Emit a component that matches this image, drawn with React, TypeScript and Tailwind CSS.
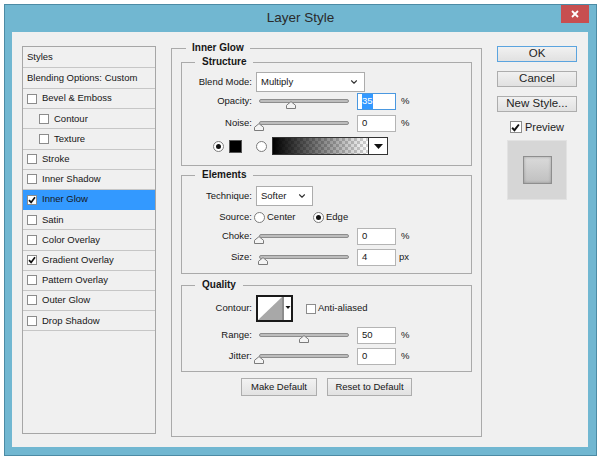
import React from 'react';
import { ChevronDown } from 'lucide-react';

const styleRows = [
  { label: 'Bevel & Emboss', checked: false },
  { label: 'Contour', nested: true },
  { label: 'Texture', nested: true },
  { label: 'Stroke' },
  { label: 'Inner Shadow' },
  { label: 'Inner Glow', checked: true, active: true },
  { label: 'Satin' },
  { label: 'Color Overlay' },
  { label: 'Gradient Overlay', checked: true },
  { label: 'Pattern Overlay' },
  { label: 'Outer Glow' },
  { label: 'Drop Shadow' },
] as { label: string; checked?: boolean; nested?: boolean; active?: boolean }[];

const CheckBox = ({ checked, big }: { checked?: boolean; big?: boolean }) => (
  <span
    className={`flex shrink-0 items-center justify-center border border-[#8c8c8c] bg-white ${
      big ? 'h-[12px] w-[12px]' : 'h-[10px] w-[10px]'
    }`}
  >
    {checked && (
      <svg width={big ? 9 : 8} height={big ? 9 : 8} viewBox="0 0 8 8">
        <path d="M1 4.2 L3.1 6.4 L7 1.3" fill="none" stroke="#111" strokeWidth="1.7" />
      </svg>
    )}
  </span>
);

const Radio = ({ on }: { on?: boolean }) => (
  <span className="flex h-[11px] w-[11px] shrink-0 items-center justify-center rounded-full border border-[#7c7c7c] bg-white">
    {on && <span className="h-[5px] w-[5px] rounded-full bg-[#111]" />}
  </span>
);

const Label = ({ children }: { children: React.ReactNode }) => (
  <span className="w-[70px] shrink-0 text-right">{children}</span>
);

const Slider = ({ value }: { value: number }) => (
  <div className="relative ml-[7px] h-[17px] w-[90px] shrink-0">
    <div className="mt-[6px] h-[4px] w-full rounded-full border border-[#8d8d8d] bg-[#bdbdbd]" />
    <svg
      className="absolute top-[8px]"
      style={{ left: (value / 100) * 90 - 5 }}
      width="10"
      height="8"
      viewBox="0 0 10 8"
    >
      <path d="M0.5 7.5 V4.3 L5 0.6 L9.5 4.3 V7.5 Z" fill="#f4f4f4" stroke="#7b7b7b" />
    </svg>
  </div>
);

const NumField = ({ value, selected }: { value: string; selected?: boolean }) => (
  <div
    className={`ml-[8px] flex h-[17px] w-[39px] shrink-0 items-center border bg-white pl-[4px] ${
      selected ? 'border-[#4a98e0]' : 'border-[#b4b4b4]'
    }`}
  >
    <span className={selected ? 'bg-[#3399ff] text-white' : ''}>{value}</span>
  </div>
);

const Select = ({ value, width }: { value: string; width: string }) => (
  <div
    className={`ml-[4px] flex h-[20px] shrink-0 items-center justify-between border border-[#acacac] bg-white pl-[4px] pr-[5px] ${width}`}
  >
    <span>{value}</span>
    <ChevronDown size={10} strokeWidth={2.6} className="text-[#333]" />
  </div>
);

const SmallButton = ({ children, width }: { children: React.ReactNode; width: string }) => (
  <div
    className={`flex h-[18px] items-center justify-center border border-[#adadad] bg-gradient-to-b from-[#f2f2f2] to-[#e2e2e2] ${width}`}
  >
    {children}
  </div>
);

const SideButton = ({ children, focused }: { children: React.ReactNode; focused?: boolean }) => (
  <div
    className={`flex h-[16px] w-[80px] items-center justify-center border bg-gradient-to-b from-[#f1f1f1] to-[#e1e1e1] text-[11.5px] text-[#1e1e1e] ${
      focused ? 'border-[#5ba4df]' : 'border-[#adadad]'
    }`}
  >
    {children}
  </div>
);

export default function App() {
  return (
    <div className="h-[459px] w-[600px] bg-white pl-[4px] pt-[4px] font-['Liberation_Sans',Arial,sans-serif] text-[9.5px] text-[#161616]">
      <div className="flex h-[452px] w-[593px] flex-col border border-[#4c8ba5] bg-[#71b7d1]">
        {/* title bar */}
        <div className="grid h-[27px] grid-cols-[1fr_auto_1fr]">
          <div />
          <div className="pt-[5px] text-[13.5px] leading-[16px] text-[#2a2a2a]">Layer Style</div>
          <div className="flex justify-end pr-[7px]">
            <div className="flex h-[18px] w-[28px] items-center justify-center bg-[#c74f50]">
              <svg width="8" height="8" viewBox="0 0 8 8">
                <path d="M1 1 L7 7 M7 1 L1 7" stroke="#fff" strokeWidth="1.8" />
              </svg>
            </div>
          </div>
        </div>

        {/* dialog body */}
        <div className="ml-[7px] mr-[8px] mb-[8px] flex flex-1 items-start bg-[#f0f0f0]">
          {/* styles list */}
          <div className="ml-[10px] mt-[14px] h-[388px] w-[134px] border border-[#a6a6a6]">
            <div className="flex h-[21px] items-center border-b border-[#c6c6c6] pl-[4px]">Styles</div>
            <div className="flex h-[21px] items-center border-b border-[#c6c6c6] pl-[4px]">
              Blending Options: Custom
            </div>
            {styleRows.map((r) => (
              <div
                key={r.label}
                className={`flex h-[20.2px] items-center gap-[5px] border-b ${
                  r.active ? 'border-[#3399ff] bg-[#3399ff]' : 'border-[#c6c6c6]'
                } ${r.nested ? 'pl-[16px]' : 'pl-[4px]'}`}
              >
                <CheckBox checked={r.checked} />
                <span>{r.label}</span>
              </div>
            ))}
          </div>

          {/* Inner Glow */}
          <fieldset className="ml-[15px] mt-[10px] h-[395px] w-[311px] border border-[#aaaaaa] px-[9px]">
            <legend className="ml-[5px] px-[6px] text-[10px] font-bold leading-[12px]">Inner Glow</legend>

            <fieldset className="mt-[2px] border border-[#aaaaaa]">
              <legend className="ml-[13px] px-[7px] text-[10px] font-bold leading-[12px]">Structure</legend>
              <div className="flex flex-col pb-[10px] pt-[4px]">
                <div className="flex h-[20px] items-center">
                  <Label>Blend Mode:</Label>
                  <Select value="Multiply" width="w-[109px]" />
                </div>
                <div className="mt-[1px] flex h-[17px] items-center">
                  <Label>Opacity:</Label>
                  <Slider value={35} />
                  <NumField value="35" selected />
                  <span className="ml-[5px]">%</span>
                </div>
                <div className="mt-[5px] flex h-[17px] items-center">
                  <Label>Noise:</Label>
                  <Slider value={0} />
                  <NumField value="0" />
                  <span className="ml-[5px]">%</span>
                </div>
                <div className="mt-[5px] flex h-[18px] items-center pl-[31px]">
                  <Radio on />
                  <span className="ml-[5px] h-[13px] w-[13px] border border-[#555] bg-black" />
                  <span className="ml-[14px]">
                    <Radio />
                  </span>
                  <div className="ml-[5px] flex h-[18px] w-[116px] border border-[#333]">
                    <div className="h-full flex-1 bg-[repeating-conic-gradient(#d2d2d2_0_25%,#ffffff_0_50%)] bg-[length:6px_6px]">
                      <div className="h-full w-full bg-gradient-to-r from-black to-transparent" />
                    </div>
                    <div className="flex h-full w-[19px] items-center justify-center border-l border-[#333] bg-white">
                      <svg width="9" height="5" viewBox="0 0 9 5">
                        <path d="M0 0 H9 L4.5 5 Z" fill="#111" />
                      </svg>
                    </div>
                  </div>
                </div>
              </div>
            </fieldset>

            <fieldset className="mt-[3px] border border-[#aaaaaa]">
              <legend className="ml-[13px] px-[7px] text-[10px] font-bold leading-[12px]">Elements</legend>
              <div className="flex flex-col pb-[7px] pt-[5px]">
                <div className="flex h-[20px] items-center">
                  <Label>Technique:</Label>
                  <Select value="Softer" width="w-[57px]" />
                </div>
                <div className="mt-[4px] flex h-[14px] items-center">
                  <Label>Source:</Label>
                  <div className="ml-[2px] flex w-[59px] items-center">
                    <Radio />
                    <span className="ml-[2px]">Center</span>
                  </div>
                  <Radio on />
                  <span className="ml-[2px]">Edge</span>
                </div>
                <div className="mt-[4px] flex h-[17px] items-center">
                  <Label>Choke:</Label>
                  <Slider value={0} />
                  <NumField value="0" />
                  <span className="ml-[5px]">%</span>
                </div>
                <div className="mt-[4px] flex h-[17px] items-center">
                  <Label>Size:</Label>
                  <Slider value={4} />
                  <NumField value="4" />
                  <span className="ml-[3px]">px</span>
                </div>
              </div>
            </fieldset>

            <fieldset className="mt-[5px] border border-[#aaaaaa]">
              <legend className="ml-[13px] px-[7px] text-[10px] font-bold leading-[12px]">Quality</legend>
              <div className="flex flex-col pb-[6px] pt-[4px]">
                <div className="flex h-[27px] items-center">
                  <Label>Contour:</Label>
                  <svg className="ml-[4px] shrink-0" width="37" height="27" viewBox="0 0 37 27">
                    <rect x="1" y="1" width="35" height="25" fill="#fff" stroke="#1a1a1a" strokeWidth="2" />
                    <path d="M2 25 L26 2 V25 Z" fill="#a8a8a8" />
                    <path d="M27 1 V26" stroke="#1a1a1a" strokeWidth="1" />
                    <path d="M29.5 11 H34.5 L32 14 Z" fill="#111" />
                  </svg>
                  <span className="ml-[13px]">
                    <CheckBox />
                  </span>
                  <span className="ml-[2px]">Anti-aliased</span>
                </div>
                <div className="mt-[5px] flex h-[17px] items-center">
                  <Label>Range:</Label>
                  <Slider value={50} />
                  <NumField value="50" />
                  <span className="ml-[5px]">%</span>
                </div>
                <div className="mt-[4px] flex h-[17px] items-center">
                  <Label>Jitter:</Label>
                  <Slider value={0} />
                  <NumField value="0" />
                  <span className="ml-[5px]">%</span>
                </div>
              </div>
            </fieldset>

            <div className="mt-[6px] flex justify-center gap-[10px]">
              <SmallButton width="w-[76px]">Make Default</SmallButton>
              <SmallButton width="w-[85px]">Reset to Default</SmallButton>
            </div>
          </fieldset>

          {/* right column */}
          <div className="ml-[15px] mt-[14px] flex w-[80px] flex-col items-center">
            <SideButton focused>OK</SideButton>
            <div className="mt-[9px]">
              <SideButton>Cancel</SideButton>
            </div>
            <div className="mt-[9px]">
              <SideButton>New Style...</SideButton>
            </div>
            <div className="mt-[9px] flex h-[12px] items-center gap-[3px] text-[11px] text-[#1e1e1e]">
              <CheckBox checked big />
              <span>Preview</span>
            </div>
            <div className="mt-[7px] flex h-[60px] w-[60px] items-center justify-center border border-[#e2e2e2] bg-[#d6d6d6]">
              <div className="h-[28px] w-[29px] border border-[#8e8e8e] bg-gradient-to-b from-[#dadada] to-[#c0c0c0] shadow-[inset_0_0_3px_rgba(0,0,0,0.25)]" />
            </div>
          </div>
        </div>
      </div>
    </div>
  );
}
